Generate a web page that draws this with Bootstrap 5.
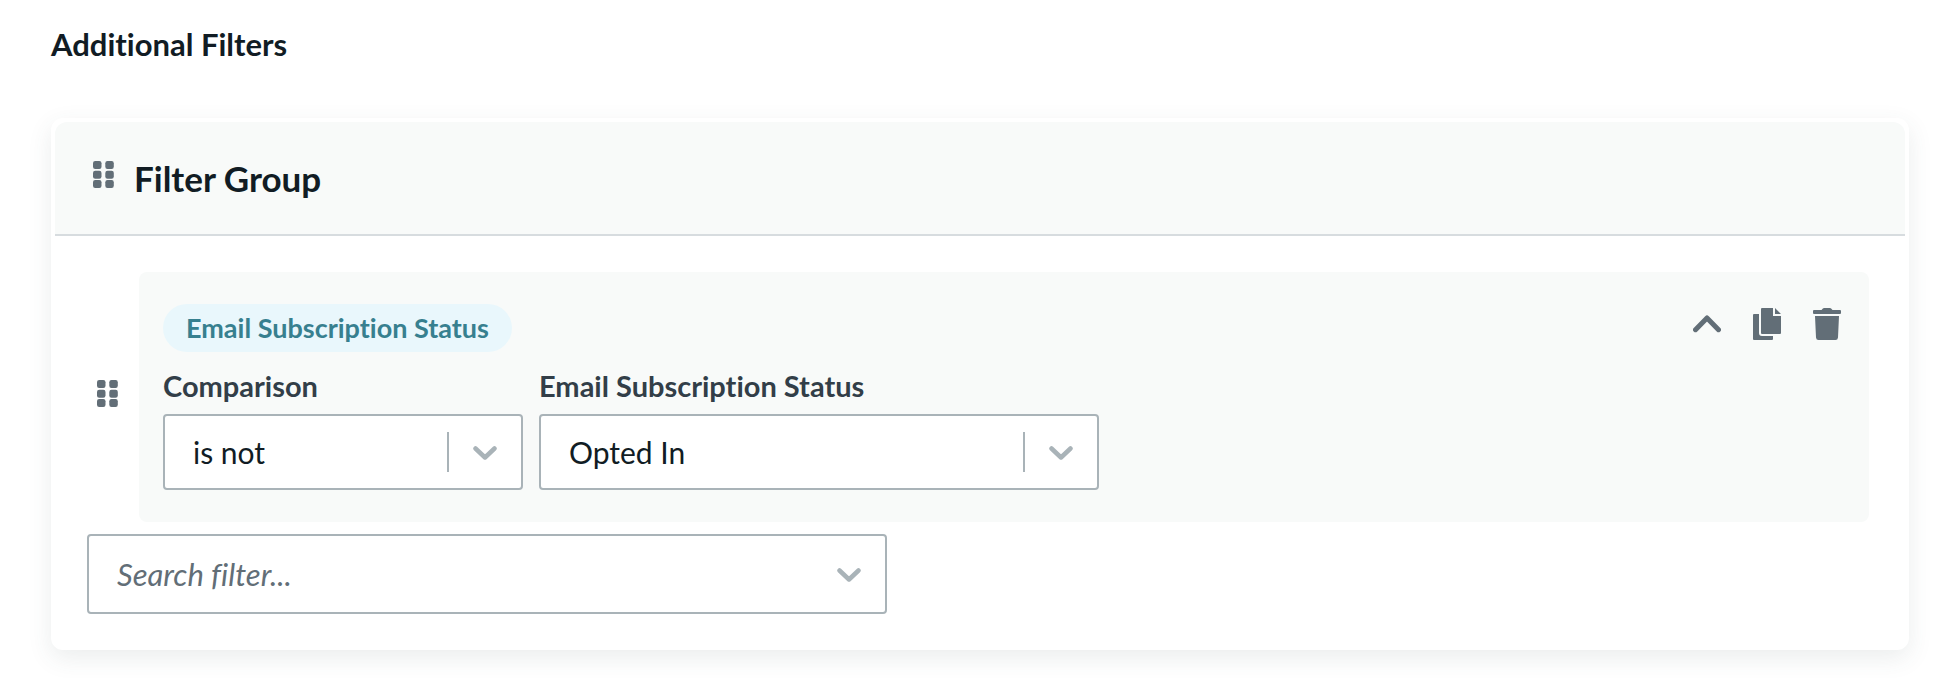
<!DOCTYPE html>
<html lang="en">
<head>
<meta charset="utf-8">
<meta name="viewport" content="width=device-width, initial-scale=1">
<title>Additional Filters</title>
<link href="https://cdn.jsdelivr.net/npm/bootstrap@5.3.0/dist/css/bootstrap.min.css" rel="stylesheet">
<style>
  :root {
    --ink: #111c24;
    --slate: #626e77;
    --line: #a9b3b8;
    --mist: #f8faf9;
    --chevron: url("data:image/svg+xml,%3Csvg xmlns='http://www.w3.org/2000/svg' width='24' height='16' viewBox='0 0 24 16'%3E%3Cpath d='M2.500 4.500L12 13.500L21.500 4.500' fill='none' stroke='%23a9b3b8' stroke-width='4.500' stroke-linecap='round' stroke-linejoin='round'/%3E%3C/svg%3E");
  }
  body { font-family: Lato, sans-serif; font-variant-ligatures: none; color: var(--ink); background: #fff; }
  .filters-page { padding: 22px 51px 28px; }
  .page-title { font-size: 31px; line-height: 44px; font-weight: 700; margin-bottom: 52px; }
  .filter-group {
    border: 4px solid #fff;
    border-radius: 12px;
    box-shadow: 0 8px 24px rgba(60, 80, 75, .1);
  }
  .filter-group > .card-header {
    background: var(--mist);
    border-bottom: 2px solid #d7dcdf;
    border-radius: 12px 12px 0 0;
    padding: 34px 38px;
    gap: 20px;
  }
  .group-title { font-size: 35px; line-height: 44px; font-weight: 700; }
  .group-body { padding: 36px 36px 32px 32px; }
  .drag-handle, .tool-btn { color: var(--slate); background: none; border: 0; padding: 0; line-height: 0; }
  .drag-handle { cursor: grab; padding-bottom: 8px; }
  .drag-handle svg, .tool-btn svg { display: block; fill: currentColor; }
  .filter-row { gap: 21px; padding-left: 10px; margin-bottom: 12px; }
  .filter-panel { background: var(--mist); border-radius: 8px; padding: 32px 24px; }
  .filter-tag {
    background: #e9f7fc;
    color: #37808f;
    border-radius: 24px;
    padding: 0 23px;
    font-size: 27px;
    line-height: 48px;
    font-weight: 700;
  }
  .tool-group { gap: 32px; padding: 4px 4px 0 0; }
  .field-set { gap: 16px; margin-top: 16px; }
  .field-narrow { flex: 0 1 360px; }
  .field-wide { flex: 0 1 560px; }
  .field-label { display: block; font-size: 29px; line-height: 36px; font-weight: 700; color: #323e48; margin-bottom: 10px; }
  .filter-select, .filter-search {
    font-size: 30px;
    font-variant-ligatures: none;
    border: 2px solid var(--line);
    border-radius: 4px;
    color: var(--ink);
    background-color: #fff;
    background-repeat: no-repeat;
  }
  .filter-select {
    height: 76px;
    padding: 0 84px 0 28px;
    background-image: var(--chevron), linear-gradient(var(--line), var(--line));
    background-size: 24px 16px, 2px 40px;
    background-position: right 24px center, right 72px center;
  }
  .filter-search {
    height: 80px;
    max-width: 800px;
    padding: 0 64px 0 28px;
    font-size: 31px;
    background-image: var(--chevron);
    background-size: 24px 16px;
    background-position: right 24px center;
  }
  .filter-search::placeholder { color: var(--slate); font-style: italic; opacity: 1; }
</style>
</head>
<body>
<svg width="0" height="0" class="position-absolute" aria-hidden="true">
  <symbol id="dots" viewBox="0 0 21 27">
    <rect width="8.500" height="8" rx="2.200"/><rect x="12.300" width="8.500" height="8" rx="2.200"/>
    <rect y="9.700" width="8.500" height="8" rx="2.200"/><rect x="12.300" y="9.700" width="8.500" height="8" rx="2.200"/>
    <rect y="19" width="8.500" height="8" rx="2.200"/><rect x="12.300" y="19" width="8.500" height="8" rx="2.200"/>
  </symbol>
</svg>
<main class="filters-page">
  <h1 class="page-title">Additional Filters</h1>
  <section class="card filter-group">
    <header class="card-header d-flex align-items-center">
      <button type="button" class="drag-handle" aria-label="Move group"><svg width="21" height="27"><use href="#dots"/></svg></button>
      <h2 class="group-title mb-0">Filter Group</h2>
    </header>
    <div class="group-body">
      <div class="filter-row d-flex align-items-center">
        <button type="button" class="drag-handle" aria-label="Move filter"><svg width="21" height="27"><use href="#dots"/></svg></button>
        <div class="filter-panel flex-grow-1">
          <div class="d-flex justify-content-between align-items-start">
            <span class="filter-tag">Email Subscription Status</span>
            <div class="tool-group d-flex">
              <button type="button" class="tool-btn" aria-label="Collapse">
                <svg width="28" height="32" viewBox="0 0 28 32"><path d="M2.500 21.700L14 10L25.500 21.700" fill="none" stroke="currentColor" stroke-width="5" stroke-linecap="round" stroke-linejoin="round"/></svg>
              </button>
              <button type="button" class="tool-btn" aria-label="Duplicate">
                <svg width="28" height="32" viewBox="0 0 28 32"><path d="M9 0H20V8H28V25Q28 26 27 26H9Q8 26 8 25V1Q8 0 9 0ZM22 0L28 6H22ZM1 6H6V25Q6 28 9 28H20V31Q20 32 19 32H1Q0 32 0 31V7Q0 6 1 6Z"/></svg>
              </button>
              <button type="button" class="tool-btn" aria-label="Delete">
                <svg width="28" height="32" viewBox="0 0 28 32"><path d="M1 2H8.500Q10 0 11 0H17Q18 0 19.500 2H27Q28 2 28 3V5Q28 6 27 6H1Q0 6 0 5V3Q0 2 1 2ZM2 8H26L25 29.500Q24.800 32 22.500 32H5.500Q3.200 32 3 29.500Z"/></svg>
              </button>
            </div>
          </div>
          <div class="field-set d-flex">
            <div class="field-narrow">
              <label class="field-label" for="comparison">Comparison</label>
              <select id="comparison" class="form-select filter-select"><option>is not</option><option>is</option></select>
            </div>
            <div class="field-wide">
              <label class="field-label" for="status">Email Subscription Status</label>
              <select id="status" class="form-select filter-select"><option>Opted In</option><option>Opted Out</option></select>
            </div>
          </div>
        </div>
      </div>
      <input type="text" class="form-control filter-search" placeholder="Search filter..." aria-label="Search filter">
    </div>
  </section>
</main>
<script src="https://cdn.jsdelivr.net/npm/bootstrap@5.3.0/dist/js/bootstrap.bundle.min.js"></script>
</body>
</html>
